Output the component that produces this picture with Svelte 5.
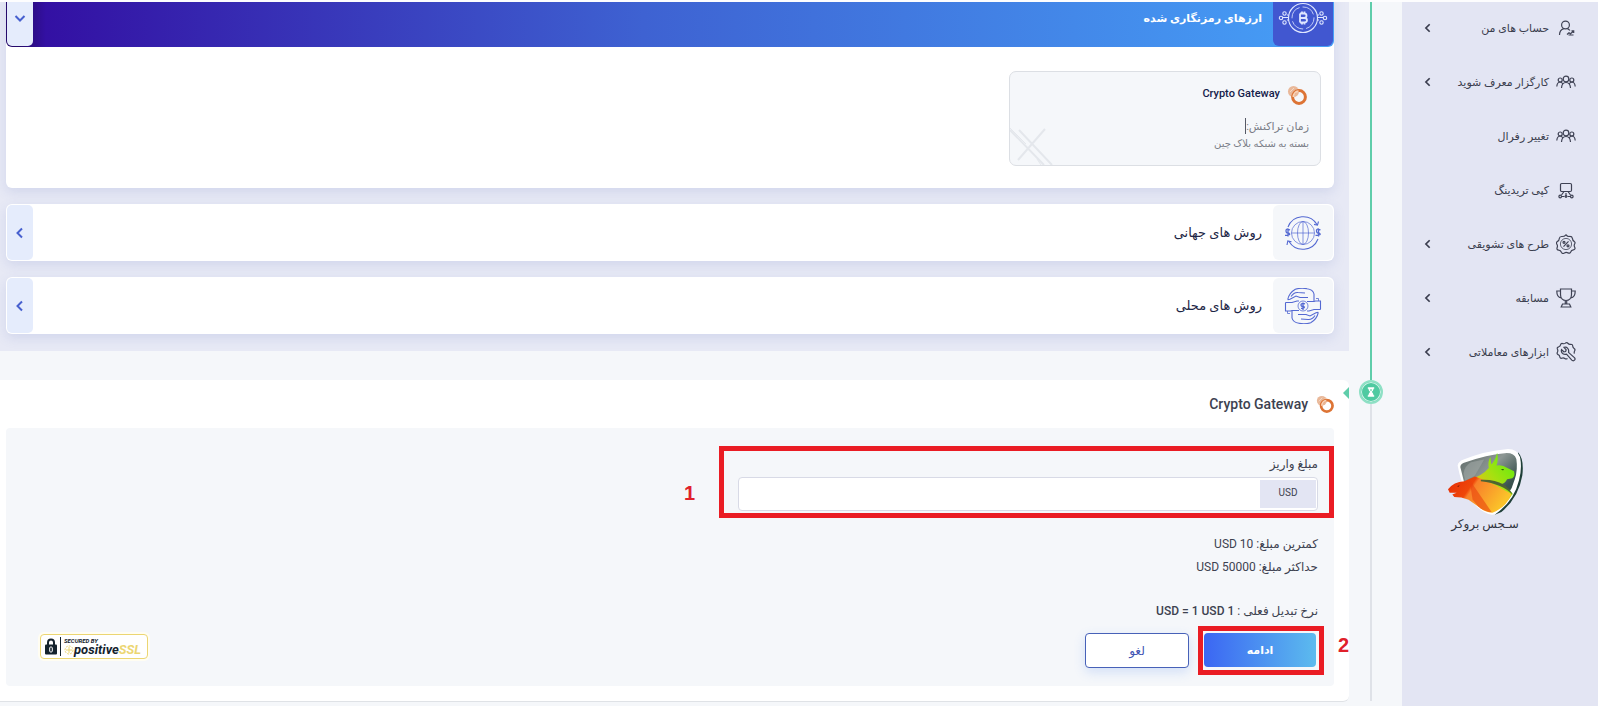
<script lang="ts">
	let amount = $state('');

	const menu = [
		{ icon: 'user', label: 'حساب های من', sub: true },
		{ icon: 'group', label: 'کارگزار معرف شوید', sub: true },
		{ icon: 'group', label: 'تغییر رفرال', sub: false },
		{ icon: 'copy', label: 'کپی تریدینگ', sub: false },
		{ icon: 'promo', label: 'طرح های تشویقی', sub: true },
		{ icon: 'trophy', label: 'مسابقه', sub: true },
		{ icon: 'tools', label: 'ابزارهای معاملاتی', sub: true }
	];
</script>

{#snippet menuIcon(name: string)}
	<svg class="menu-icon" viewBox="0 0 20 20" aria-hidden="true">
		{#if name === 'user'}
			<circle cx="9.5" cy="7" r="3.9" />
			<path d="M3.5 17c0-3.6 1.8-5.6 4.3-6.4M11.5 10.6c1 .5 1.8 1.1 2.4 1.9" />
			<path d="M11 16.5l2-1.8 1.5 1 2.8-2.5M15.500 12.800h2.200v2.200M12.5 17h5" />
		{:else if name === 'group'}
			<circle cx="10" cy="7" r="2.8" />
			<circle cx="4.2" cy="8" r="2" />
			<circle cx="15.8" cy="8" r="2" />
			<path d="M5.5 16c.2-3.8 1.6-5.5 4.5-5.5s4.3 1.7 4.5 5.5M.8 14.5c.2-2.6 1.2-4.3 3.2-4.5 1.2 0 2 .6 2.5 1.6M19.2 14.5c-.2-2.6-1.2-4.3-3.2-4.5-1.2 0-2 .6-2.5 1.6" />
		{:else if name === 'copy'}
			<rect x="4.5" y="3.5" width="11" height="8" rx="1.2" />
			<path d="M8 11.5l-2.500 3.500M12 11.5l2.500 3.500M10 13v2.500M6 16.5h2.500M11.500 16.5h2.500" />
			<circle cx="4.2" cy="16.5" r="1.3" />
			<circle cx="10" cy="16.5" r=".8" />
			<circle cx="15.8" cy="16.5" r="1.3" />
		{:else if name === 'promo'}
			<path d="M10 .8q1.5 1.9 3.2 1.7 2.8-.3 3.2 1.9.2 2.2 1.8 3 1.5 1 .4 2.6-.9 1.8.2 3.5.8 1.9-1.5 2.3-2 .3-2.5 1.9-.8 2.2-2.8 1.2-2-1-3.6.1-2 1.3-3-.8-.7-2-2.7-2.1-2.3-.4-1.6-2.4.8-1.9-.2-3.5-1.3-1.7.6-2.8 1.7-.8 1.8-2.9.3-2.2 2.7-2Q8.400 2.500 10 .8z" />
			<circle cx="10" cy="10" r="5.6" stroke-width=".8" />
			<path d="M12.5 7.3l-5 5.4" />
			<circle cx="8" cy="8.3" r="1" />
			<circle cx="12" cy="11.8" r="1" />
		{:else if name === 'trophy'}
			<path d="M4.5 1h11v5.5c0 3.5-2.2 6-5.5 6s-5.5-2.5-5.5-6zM4.5 3H.8c0 4 1.4 6.6 4.4 6.9M15.5 3h3.7c0 4-1.4 6.6-4.4 6.9M9.3 12.5V16M10.7 12.5V16M6.5 16h7l1.3 3H5.2z" />
		{:else}
			<path d="M11.5 16.5q-1.5 1-2.7 0-1.5-1.2-3-.3-1.8.5-2-1.5-.2-1.7-1.7-2.1-1.6-.8-.6-2.6.7-1.5-.1-3-.6-1.7 1.3-2.2 1.6-.5 1.8-2 .5-1.7 2.3-1.2 1.5.5 2.7-.5 1.5-.9 2.6.4 1 1.2 2.6.8 1.9-.2 2 1.7.1 1.6 1.4 2.4 1.5 1 .5 2.6-.7 1.3-.2 2.6" />
			<path d="M8 5.4l2.2 2.4-.6 1.7-1.8.3-2.3-2.2c-.7 2.3.8 5 3.8 4.8l1.2-.2 5.3 6c.8.8 2 .8 2.7 0s.7-1.8-.1-2.6l-5.9-5.2c.9-3.2-1.5-6-4.5-5z" />
		{/if}
	</svg>
{/snippet}

{#snippet chevron(down: boolean)}
	<svg class="chevron" class:down viewBox="0 0 12 12" aria-hidden="true">
		<path d="M8 1.5L3.5 6L8 10.5" />
	</svg>
{/snippet}

{#snippet gatewayLogo()}
	<svg class="gateway-logo" viewBox="0 0 20 20" aria-hidden="true">
		<circle cx="6.5" cy="6.5" r="5.5" fill="#e9b899" />
		<path d="M3 7l4-4M4.5 9.5l6-6" stroke="#f4d8c5" stroke-width="1" />
		<circle cx="12" cy="12" r="6.4" fill="none" stroke="#dd7435" stroke-width="3" />
		<path d="M6.500 12c-.1-3 2-5.500 5-5.700" fill="none" stroke="#f8d3b8" stroke-width="2" />
	</svg>
{/snippet}

<div class="page" dir="rtl" lang="fa">
	<aside class="sidebar">
		<nav>
			{#each menu as item}
				<a class="menu-item" href="#menu">
					{@render menuIcon(item.icon)}
					<span class="menu-label">{item.label}</span>
					{#if item.sub}
						{@render chevron(false)}
					{/if}
				</a>
			{/each}
		</nav>

		<div class="brand">
			<svg class="brand-logo" viewBox="135 55 235 205" aria-hidden="true">
				<defs>
					<linearGradient id="shield" x1="0" y1="0" x2="1" y2="1">
						<stop offset="0" stop-color="#5e6967" />
						<stop offset=".4" stop-color="#8d9794" />
						<stop offset=".7" stop-color="#3c5450" />
						<stop offset="1" stop-color="#24423c" />
					</linearGradient>
					<linearGradient id="bull" x1="1" y1="0" x2="0" y2="1">
						<stop offset="0" stop-color="#55ee10" />
						<stop offset=".45" stop-color="#a8e010" />
						<stop offset=".8" stop-color="#fbb31d" />
					</linearGradient>
					<linearGradient id="bear" x1="0" y1="0" x2="1" y2=".4">
						<stop offset="0" stop-color="#e52b07" />
						<stop offset=".4" stop-color="#ef480a" />
						<stop offset=".45" stop-color="#f8802a" />
						<stop offset="1" stop-color="#fbc32a" />
					</linearGradient>
				</defs>
				<path d="M352 68Q371 88 365 138Q354 205 302 248L282 256Q345 200 353 125Z" fill="#1f3f38" />
				<path d="M170 108Q172 96 188 90Q250 64 322 58Q350 58 358 82Q365 115 355 152Q340 215 284 254Q270 260 250 248Q190 215 170 108Z" fill="#fff" />
				<path d="M178 112Q179 102 194 98Q255 76 318 70Q341 70 347 88Q352 120 342 150Q330 200 276 240Q215 230 190 160Z" fill="url(#shield)" />
				<path d="M188 132Q190 110 210 98L250 90L222 138L193 154Z" fill="#a3aaa8" opacity=".55" />
				<path d="M205 150Q245 138 264 115Q260 95 269 82L271 104Q283 95 289 69Q294 90 287 108Q305 105 320 115L340 125Q344 140 335 146L319 149Q312 165 296 163Q319 170 336 193Q320 220 291 240Z" fill="url(#bull)" />
				<path d="M141 179Q158 157 190 155L222 141Q270 158 305 179Q326 188 332 195Q315 235 275 250Q251 249 236 234L203 211L181 204L160 203L154 195L167 190L146 190Z" fill="url(#bear)" />
				<path d="M206 151L273 249Q251 248 232 231L215 210Z" fill="#e9430f" opacity=".6" />
				<path d="M240 151Q282 149 308 165Q328 178 336 196Q306 163 240 155Z" fill="#4f6432" />
				<path d="M300 119l10-1-3 5z" fill="#244b15" />
				<path d="M168 170l8-3-3 5z" fill="#6b1206" />
			</svg>
			<span class="brand-name">سـجس بروکر</span>
		</div>
	</aside>

	<div class="timeline" aria-hidden="true">
		<span class="line done"></span>
		<span class="node">
			<svg viewBox="0 0 10 12">
				<path d="M1 0h8v2H8.2C8 4 7 5 6 6c1 1 2 2 2.2 4H9v2H1v-2h.8C2 8 3 7 4 6 3 5 2 4 1.8 2H1z" fill="#fff" />
				<path d="M3.5 3h3L5 5z" fill="#46c79b" />
			</svg>
		</span>
		<span class="line"></span>
	</div>

	<main>
		<section class="methods">
			<article class="method">
				<header class="method-head open">
					<span class="method-icon">
						<svg viewBox="0 0 50 36" aria-hidden="true">
							<circle cx="25" cy="18" r="14.5" />
							<circle cx="25" cy="18" r="11" stroke-width=".8" stroke-dasharray="14 3" />
							<path d="M22 13.5v9M22 13.5h4q2.5 0 2.5 2.2T26 18H22M26 18q3 0 3 2.2T26 22.5H22M24 11.5v2M26.5 11.5v2M24 22.5v2M26.5 22.5v2" stroke-width="1.8" />
							<path d="M10.5 15H9M11 20H9M5 17.5h6M39.5 15H41M39 20h2M39 17.5h6" />
							<circle cx="6.5" cy="13.5" r="1.7" />
							<circle cx="3" cy="18" r="1.7" />
							<circle cx="6.5" cy="22.5" r="1.7" />
							<circle cx="43.5" cy="13.5" r="1.7" />
							<circle cx="47" cy="18" r="1.7" />
							<circle cx="43.5" cy="22.5" r="1.7" />
						</svg>
					</span>
					<h2>ارزهای رمزنگاری شده</h2>
					<button class="toggle" type="button" aria-label="ارزهای رمزنگاری شده">{@render chevron(true)}</button>
				</header>
				<div class="method-body">
					<div class="gateway">
						<div class="gateway-title">
							{@render gatewayLogo()}
							<span>Crypto Gateway</span>
						</div>
						<p class="gateway-time">زمان تراکنش:<span class="caret"></span></p>
						<p class="gateway-note">بسته به شبکه بلاک چین</p>
						<svg class="watermark" viewBox="0 0 44 38" aria-hidden="true">
							<path d="M0 3l34 35M9 3l33 35M35 2L8 33" />
							<path d="M0 1l16 16M31 38l-4-6" stroke-width="1" />
						</svg>
					</div>
				</div>
			</article>

			<article class="method">
				<header class="method-head">
					<span class="method-icon">
						<svg viewBox="0 0 50 36" aria-hidden="true">
							<path d="M10 12A16.3 16.3 0 0 1 39 9.5M40 24A16.3 16.3 0 0 1 11 26.5M40.5 6.5l-1 3.7-3.5-.8M9 30l.8-4 3.7.8" />
							<g stroke-width=".7">
								<circle cx="25" cy="18" r="11.5" />
								<ellipse cx="25" cy="18" rx="5.5" ry="11.5" />
								<path d="M25 6.5v23M13.5 18h23" />
							</g>
							<path d="M12 15q-4-2-4 .8t3 2.4q2.5 2-4 2.2M10 13.5v8M42.5 15q-4-2-4 .8t3 2.4q2.5 2-4 2.2M40.5 13.5v8" stroke-width="1.3" />
						</svg>
					</span>
					<h2>روش های جهانی</h2>
					<button class="toggle" type="button" aria-label="روش های جهانی">{@render chevron(false)}</button>
				</header>
			</article>

			<article class="method">
				<header class="method-head">
					<span class="method-icon">
						<svg viewBox="0 0 50 36" aria-hidden="true">
							<path d="M9.7 11.7Q11 5 17.3 1.3Q23-.5 29 .7Q35 1.5 36 6v7.5M9.7 11.7L12 11.200L18 8l4 1.500h8M13 8.500q3-4.500 7-4l7 .5" />
							<path d="M40.3 24.3Q39 31 32.7 34.7Q27 36.5 21 35.3Q15 34.5 14 30v-7.5M40.3 24.3L38 24.800L32 28l-4-1.500h-8M37 27.500q-3 4.500-7 4l-7-.5" />
							<path d="M7.5 14.5v8.5h5l1.500-.5M7.5 14.500h6.500l5-1.500h2M42.5 21.5V13h-5l-1.500.5M42.5 21.500H36l-5 1.500h-2M29 13.5h7M14 22.5h7" />
							<circle cx="25" cy="18" r="5" stroke-width=".8" />
							<path d="M27 15.8q-4-1-4 1t2.5 1.6q2.5 1.5-2.5 2M25 14.5v7.5" stroke-width="1.3" />
							<path d="M38 10.5h2.5V13M12 25.5H9.5V23" stroke-width=".8" />
						</svg>
					</span>
					<h2>روش های محلی</h2>
					<button class="toggle" type="button" aria-label="روش های محلی">{@render chevron(false)}</button>
				</header>
			</article>
		</section>

		<section class="deposit">
			<span class="pointer"></span>
			<h3>
				{@render gatewayLogo()}
				<span>Crypto Gateway</span>
			</h3>

			<form class="form" onsubmit={(e) => e.preventDefault()}>
				<div class="field-row">
					<div class="mark field">
						<label for="amount">مبلغ واریز</label>
						<div class="input-group">
							<span class="currency">USD</span>
							<input id="amount" type="text" bind:value={amount} />
						</div>
					</div>
					<span class="step">1</span>
				</div>

				<div class="limits">
					<p>کمترین مبلغ: 10 USD</p>
					<p>حداکثر مبلغ: 50000 USD</p>
				</div>
				<p class="rate">نرخ تبدیل فعلی : <b>1 USD = 1 USD</b></p>

				<div class="actions">
					<div class="mark submit">
						<button class="primary" type="submit">ادامه</button>
						<span class="step">2</span>
					</div>
					<button class="cancel" type="button">لغو</button>

					<div class="ssl" dir="ltr">
						<svg class="lock" viewBox="0 0 12 17" aria-hidden="true">
							<path d="M3 8V4.5a3 3 0 0 1 6 0V8" fill="none" stroke="#14222d" stroke-width="2" />
							<rect y="6.5" width="12" height="10" rx="1" fill="#14222d" />
							<rect x="4.7" y="9" width="2.6" height="5" rx="1" fill="none" stroke="#fff" />
						</svg>
						<div class="ssl-text">
							<span class="ssl-top">SECURED BY</span>
							<span class="ssl-name">
								<svg viewBox="0 0 10 10" aria-hidden="true">
									<circle cx="5" cy="5" r="4" stroke-dasharray="2 1" />
									<path d="M5 2v6M2 5h6" />
								</svg>positive<em>SSL</em>
							</span>
						</div>
					</div>
				</div>
			</form>
		</section>
	</main>
</div>

<style>
	:global(body) {
		background: #f5f7fa;
	}

	.page {
		box-sizing: border-box;
		display: flex;
		min-height: 100vh;
		border-top: 2px solid #fdfdfe;
		background: #f5f7fa;
		color: #3d4250;
		font-family: Roboto, "DejaVu Sans", sans-serif;
		font-size: 12px;
		overflow: hidden;
	}

	h2,
	h3,
	p {
		margin: 0;
	}

	button,
	input {
		box-sizing: border-box;
		font-family: inherit;
		cursor: pointer;
	}

	.chevron {
		width: 12px;
		height: 12px;
		fill: none;
		stroke: currentColor;
		stroke-width: 2;
	}

	.chevron.down {
		transform: rotate(-90deg);
	}

	/* sidebar */
	.sidebar {
		box-sizing: border-box;
		flex: 0 0 196px;
		background: #e3e5f3;
	}

	.menu-item {
		box-sizing: border-box;
		display: flex;
		align-items: center;
		height: 54px;
		padding: 0 22px 2px 21px;
		color: #3a3d4e;
		font-size: 11px;
		text-decoration: none;
	}

	.menu-item .chevron {
		width: 10px;
		height: 10px;
	}

	.menu-icon {
		width: 20px;
		height: 20px;
		margin-left: 7px;
		fill: none;
		stroke: #3f4254;
		stroke-width: 1.2;
	}

	.menu-label {
		flex: 1;
		white-space: nowrap;
	}

	.brand {
		display: flex;
		flex-direction: column;
		align-items: center;
		margin: 68px 30px 0 0;
	}

	.brand-logo {
		width: 78px;
		height: 68px;
	}

	.brand-name {
		color: #32353f;
		font-size: 12px;
		line-height: 16px;
	}

	/* steps */
	.timeline {
		display: flex;
		flex: 0 0 42px;
		flex-direction: column;
		align-items: center;
		margin-right: 10px;
		margin-left: 1px;
		padding-bottom: 5px;
	}

	.line {
		flex: 1;
		width: 2px;
		background: #dfe2e8;
	}

	.line.done {
		flex: 0 0 378px;
		background: #5fcdaa;
	}

	.node {
		box-sizing: border-box;
		display: grid;
		place-items: center;
		width: 24px;
		height: 24px;
		border: 2px solid #8fe0c5;
		border-radius: 50%;
		background: #4fcaa1;
		box-shadow: inset 0 0 0 1px #d2f3e8;
	}

	.node svg {
		width: 8px;
		height: 10px;
	}

	main {
		flex: 1;
		min-width: 0;
	}

	/* payment methods */
	.methods {
		display: flex;
		flex-direction: column;
		gap: 16px;
		margin-top: -13px;
		padding: 0 15px 17px 6px;
		background: #e7e9f5;
	}

	.method {
		border-radius: 6px;
		background: #fff;
		box-shadow: 0 4px 12px rgba(90, 110, 190, 0.15);
	}

	.method-head {
		box-sizing: border-box;
		display: flex;
		align-items: stretch;
		gap: 11px;
		height: 57px;
		padding: 1px;
		border-radius: 6px;
	}

	.method-head h2 {
		flex: 1;
		color: #1c2545;
		font-size: 13px;
		font-weight: normal;
		line-height: 55px;
	}

	.method-icon {
		display: grid;
		place-items: center;
		width: 60px;
		border-radius: 6px;
		background: #f5f7fa;
	}

	.method-icon svg {
		width: 50px;
		height: 36px;
		fill: none;
		stroke: #5469d2;
		stroke-width: 1.1;
	}

	.toggle {
		display: grid;
		place-items: center;
		width: 26px;
		padding: 0;
		border: 0;
		border-radius: 5px;
		background: #e5ecfc;
		color: #4760cf;
	}

	.method-head.open {
		height: 58px;
		background: linear-gradient(to left, #469ff7, #3e62d2 52%, #3310a3 97%, #260a6b 99%);
	}

	.open h2 {
		color: #fff;
		font-size: 11px;
		font-weight: bold;
		line-height: 58px;
	}

	.open .method-icon {
		background: #4157d0;
	}

	.open .method-icon svg {
		stroke: #dfe6ff;
	}

	.method-body {
		padding: 24px 13px 22px;
	}

	.gateway {
		box-sizing: border-box;
		position: relative;
		width: 312px;
		height: 95px;
		padding: 13px 11px 0;
		border: 1px solid #dcdfe4;
		border-radius: 7px;
		background: #f5f7fa;
		overflow: hidden;
	}

	.gateway-title {
		display: flex;
		gap: 7px;
		height: 22px;
		padding-right: 2px;
		color: #14204a;
		font-size: 11px;
		font-weight: 500;
		line-height: 17px;
	}

	.gateway-logo {
		width: 20px;
		height: 20px;
	}

	.gateway-time,
	.gateway-note {
		color: #7a7d87;
		font-size: 10px;
		line-height: 17px;
	}

	.gateway-time {
		display: flex;
		margin-top: 11px;
		font-size: 11px;
	}

	.caret {
		width: 1px;
		height: 16px;
		background: #555966;
	}

	.watermark {
		position: absolute;
		bottom: 0;
		left: 0;
		width: 44px;
		height: 38px;
		fill: none;
		stroke: #e4e7ec;
		stroke-width: 2;
	}

	/* deposit form */
	.deposit {
		position: relative;
		margin-top: 29px;
		padding: 0 15px 15px 6px;
		border-bottom: 1px solid #dfe2e6;
		border-radius: 0 6px 6px 0;
		background: #fff;
	}

	.pointer {
		position: absolute;
		top: 7px;
		right: 0;
		border-top: 6px solid transparent;
		border-right: 6px solid #5fcdaa;
		border-bottom: 6px solid transparent;
	}

	.deposit h3 {
		display: flex;
		align-items: center;
		gap: 8px;
		height: 48px;
		color: #3d4250;
		font-size: 14px;
		font-weight: 500;
	}

	.deposit h3 .gateway-logo {
		width: 18px;
		height: 18px;
	}

	.form {
		padding: 18px 0 11px;
		border-radius: 4px;
		background: #f5f7fa;
	}

	.mark {
		box-sizing: border-box;
		border: 5px solid #ea1c24;
	}

	.step {
		color: #e0202a;
		font-family: "Liberation Sans", Arial, sans-serif;
		font-size: 20px;
		font-weight: bold;
		line-height: 24px;
	}

	.field-row {
		display: flex;
		align-items: center;
		gap: 24px;
	}

	.field-row .step {
		padding-top: 22px;
	}

	.field {
		width: calc(50% - 49px);
		padding: 0 11px 2px 14px;
	}

	.field label {
		display: block;
		line-height: 26px;
	}

	.input-group {
		box-sizing: border-box;
		display: flex;
		height: 34px;
		padding: 2px 1px;
		border: 1px solid #d8dae6;
		border-radius: 4px;
		background: #fff;
	}

	.currency {
		width: 56px;
		background: #e3e5f3;
		font-size: 10px;
		line-height: 26px;
		text-align: center;
	}

	.input-group input {
		flex: 1;
		min-width: 0;
		padding: 0 8px;
		border: 0;
		outline: 0;
		background: transparent;
		cursor: text;
	}

	.limits,
	.rate {
		padding-right: 16px;
		line-height: 23px;
	}

	.limits {
		margin-top: 15px;
	}

	.rate {
		margin-top: 21px;
	}

	.rate b {
		font-weight: 500;
	}

	.actions {
		display: flex;
		align-items: center;
		margin-top: 3px;
		padding-right: 10px;
	}

	.submit {
		position: relative;
		width: 126px;
		height: 49px;
		padding: 2px 3px 3px 1px;
	}

	.submit .step {
		position: absolute;
		top: 2px;
		right: -30px;
	}

	.primary {
		width: 112px;
		height: 34px;
		border: 0;
		border-radius: 4px;
		background: linear-gradient(to left, #5cbbee, #3b66f3);
		color: #fff;
		font-size: 11px;
		font-weight: bold;
	}

	.cancel {
		width: 104px;
		height: 35px;
		margin-right: 9px;
		border: 1px solid #4761b8;
		border-radius: 4px;
		background: #fff;
		box-shadow: 0 4px 12px rgba(70, 130, 240, 0.2);
		color: #4054b4;
		font-size: 12px;
	}

	.ssl {
		box-sizing: border-box;
		display: flex;
		align-items: center;
		gap: 3px;
		width: 108px;
		height: 25px;
		margin: 0 auto 9px 34px;
		padding: 0 4px;
		border: 1px solid #ecd672;
		border-radius: 4px;
		background: #fff;
		box-shadow: 0 0 0 2px #fffdf2;
	}

	.lock {
		flex: none;
		width: 12px;
		height: 17px;
	}

	.ssl-text {
		padding-left: 3px;
		border-left: 1px solid #14222d;
		color: #14222d;
		font-style: italic;
		font-weight: bold;
		white-space: nowrap;
	}

	.ssl-top,
	.ssl-name {
		display: block;
		font-size: 6px;
		line-height: 7px;
	}

	.ssl-name {
		display: flex;
		align-items: center;
		font-size: 13px;
		line-height: 12px;
	}

	.ssl-name em {
		color: #ecd672;
	}

	.ssl-name svg {
		width: 10px;
		height: 10px;
		fill: none;
		stroke: #ecd672;
	}
</style>
